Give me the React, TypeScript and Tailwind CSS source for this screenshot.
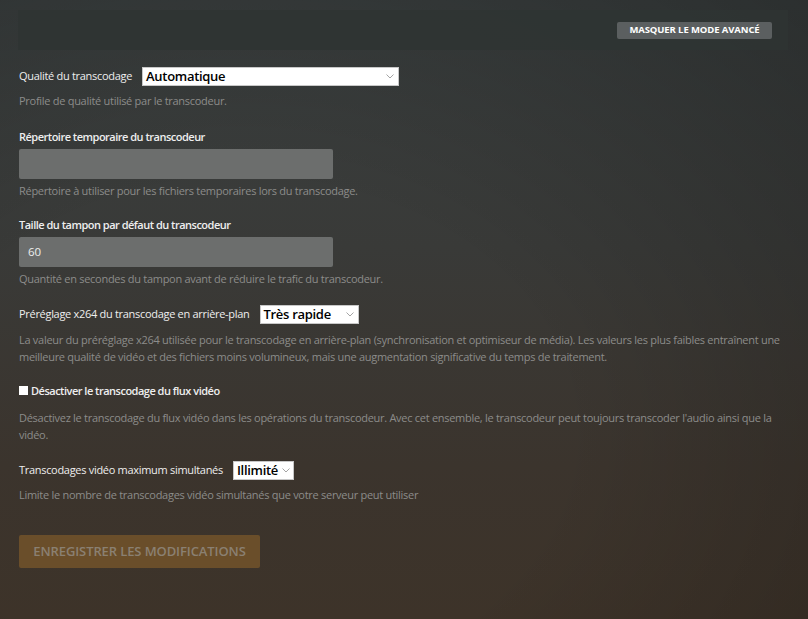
import React from "react";

const font = { fontFamily: '"Open Sans", "Noto Sans", sans-serif' };

function Chevron() {
  return (
    <svg width="8" height="5" viewBox="0 0 8 5" className="shrink-0">
      <path d="M0.5 0.5 L4 4 L7.5 0.5" fill="none" stroke="#9a9a9a" strokeWidth="0.9" />
    </svg>
  );
}

function Select({ value, width }: { value: string; width: string }) {
  return (
    <div className={`${width} h-[19px] bg-white border border-[#c8c8c8] flex items-center justify-between gap-[4px] pl-[3px] pr-[4px]`}>
      <span className="text-[13px] leading-none text-black font-semibold tracking-[-0.3px]">{value}</span>
      <Chevron />
    </div>
  );
}

function Desc({ children, className = "" }: { children: React.ReactNode; className?: string }) {
  return <p className={`text-[11px] tracking-[-0.28px] leading-[17.5px] text-[#8c8c8a] ${className}`}>{children}</p>;
}

export default function App() {
  return (
    <div
      style={font}
      className="w-[808px] h-[619px] overflow-hidden bg-[linear-gradient(180deg,#3a3f3f_0%,#393a38_40%,#3b342d_75%,#3d3329_100%)]"
    >
      <div className="w-full h-full bg-[radial-gradient(ellipse_at_30%_70%,rgba(0,0,0,0)_40%,rgba(0,0,0,0.25)_100%)] px-[18px] pt-[10px]">
        <div className="w-[770px] h-[40px] bg-[#2f3433]/90 flex items-center justify-end pr-[16px]">
          <button className="h-[17px] w-[155px] rounded-[2px] bg-[#5b5f60] text-white text-[9.5px] font-bold tracking-[-0.1px] uppercase leading-none flex items-center justify-center">
            Masquer le mode avancé
          </button>
        </div>

        <div className="pl-[1px]">
          <div className="mt-[17px] flex items-center gap-[10px]">
            <span className="text-[11px] tracking-[-0.3px] text-[#eeeeee]">Qualité du transcodage</span>
            <Select value="Automatique" width="w-[257px]" />
          </div>
          <Desc className="mt-[6px]">Profile de qualité utilisé par le transcodeur.</Desc>

          <div className="mt-[18px] text-[11px] tracking-[-0.5px] font-semibold text-[#eeeeee] leading-[17px]">Répertoire temporaire du transcodeur</div>
          <div className="mt-[4px] w-[314px] h-[30px] rounded-[2px] bg-[#6c6e6d]" />
          <Desc className="mt-[3px]">Répertoire à utiliser pour les fichiers temporaires lors du transcodage.</Desc>

          <div className="mt-[17px] text-[11px] tracking-[-0.5px] font-semibold text-[#eeeeee] leading-[17px]">Taille du tampon par défaut du transcodeur</div>
          <div className="mt-[4px] w-[314px] h-[30px] rounded-[2px] bg-[#6c6e6d] flex items-center pl-[9px] text-[11.5px] text-[#eeeeee]">60</div>
          <Desc className="mt-[3px]">Quantité en secondes du tampon avant de réduire le trafic du transcodeur.</Desc>

          <div className="mt-[17px] flex items-center gap-[10px]">
            <span className="text-[11px] tracking-[-0.3px] text-[#eeeeee]">Préréglage x264 du transcodage en arrière-plan</span>
            <Select value="Très rapide" width="w-[99px]" />
          </div>
          <Desc className="mt-[7px]">
            La valeur du préréglage x264 utilisée pour le transcodage en arrière-plan (synchronisation et optimiseur de média). Les valeurs les plus faibles entraînent une meilleure qualité de vidéo et des fichiers moins volumineux, mais une augmentation significative du temps de traitement.
          </Desc>

          <div className="mt-[16px] flex items-center gap-[3px]">
            <span className="w-[9px] h-[9px] bg-white inline-block" />
            <span className="text-[11px] tracking-[-0.5px] font-semibold text-[#eeeeee] leading-[17px]">Désactiver le transcodage du flux vidéo</span>
          </div>
          <Desc className="mt-[10px]">
            Désactivez le transcodage du flux vidéo dans les opérations du transcodeur. Avec cet ensemble, le transcodeur peut toujours transcoder l'audio ainsi que la vidéo.
          </Desc>

          <div className="mt-[17px] flex items-center gap-[10px]">
            <span className="text-[11px] tracking-[-0.3px] text-[#eeeeee]">Transcodages vidéo maximum simultanés</span>
            <Select value="Illimité" width="w-[61px]" />
          </div>
          <Desc className="mt-[6px]">Limite le nombre de transcodages vidéo simultanés que votre serveur peut utiliser</Desc>

          <button className="mt-[32px] w-[241px] h-[33px] rounded-[2px] bg-[#6a4e2a] text-[#8a8072] text-[13px] font-semibold uppercase tracking-[-0.1px] flex items-center justify-center">
            Enregistrer les modifications
          </button>
        </div>
      </div>
    </div>
  );
}
